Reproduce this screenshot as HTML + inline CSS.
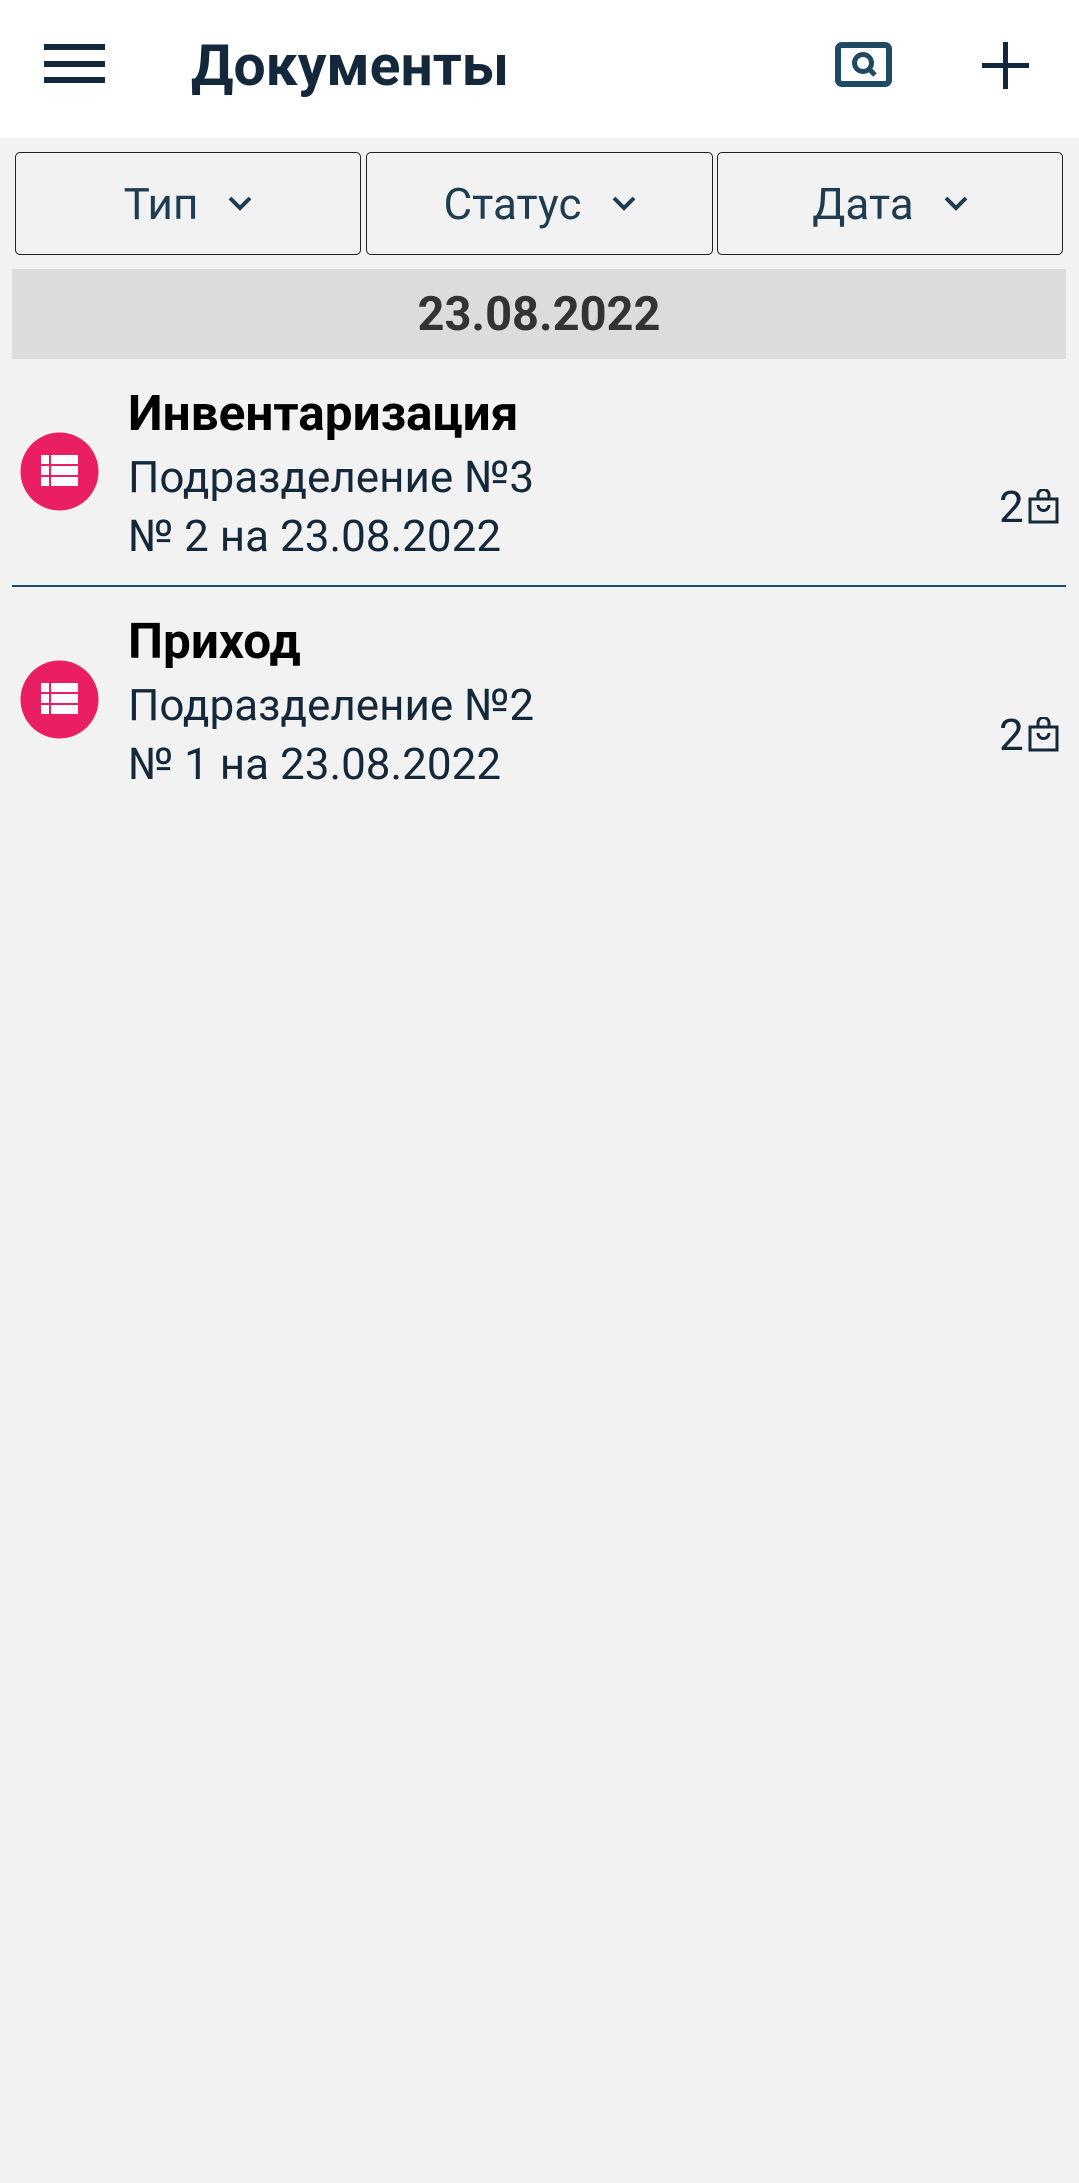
<!DOCTYPE html>
<html><head><meta charset="utf-8"><style>
*{margin:0;padding:0;box-sizing:border-box}
body{width:1079px;height:2183px;background:#f2f2f2;font-family:"Roboto","Liberation Sans",sans-serif;position:relative;overflow:hidden}
.abs{position:absolute}
.hdr{left:0;top:0;width:1079px;height:138px;background:#fff}
.btn{top:152px;height:103px;border:1.5px solid #222;border-radius:5px;background:#f2f2f2;color:#1e3d52;font-size:44px;display:flex;align-items:center;justify-content:center}
.btn svg{margin-left:30px}
.t{font-size:44px;color:#14283c;white-space:nowrap;line-height:1}
.b{font-weight:bold;color:#000;font-size:49.5px}
</style></head><body>
<div class="abs hdr"></div>
<svg class="abs" style="left:44px;top:44px" width="62" height="40"><rect x="0" y="0" width="61" height="6" fill="#14283c"/><rect x="0" y="17" width="61" height="6" fill="#14283c"/><rect x="0" y="33" width="61" height="6" fill="#14283c"/></svg>
<div class="abs t" style="left:191px;top:37px;font-size:57px;font-weight:bold;color:#14283c">Документы</div>
<svg class="abs" style="left:835px;top:42px" width="58" height="46"><rect x="3" y="3" width="51" height="39" rx="4" fill="none" stroke="#1f4a63" stroke-width="6"/><circle cx="28" cy="21" r="8.5" fill="none" stroke="#1f4a63" stroke-width="5"/><line x1="34" y1="27" x2="40" y2="33" stroke="#1f4a63" stroke-width="5"/></svg>
<svg class="abs" style="left:982px;top:42px" width="48" height="47"><rect x="0" y="21" width="47" height="5" fill="#14283c"/><rect x="21" y="0" width="5" height="47" fill="#14283c"/></svg>
<div class="abs btn" style="left:15px;width:346px">Тип<svg width="24" height="15"><path d="M2 2 L12 12 L22 2" fill="none" stroke="#1e3d52" stroke-width="4"/></svg></div>
<div class="abs btn" style="left:366px;width:347px">Статус<svg width="24" height="15"><path d="M2 2 L12 12 L22 2" fill="none" stroke="#1e3d52" stroke-width="4"/></svg></div>
<div class="abs btn" style="left:717px;width:346px">Дата<svg width="24" height="15"><path d="M2 2 L12 12 L22 2" fill="none" stroke="#1e3d52" stroke-width="4"/></svg></div>
<div class="abs" style="left:12px;top:269px;width:1054px;height:90px;background:#dcdcdc;display:flex;align-items:center;justify-content:center;font-size:47px;font-weight:bold;color:#333">23.08.2022</div>

<svg class="abs" style="left:20px;top:432px" width="79" height="79"><circle cx="39.5" cy="39.5" r="39" fill="#e91e63"/><g fill="#fff"><rect x="21" y="23" width="8" height="9"/><rect x="31" y="23" width="27" height="9"/><rect x="21" y="34" width="8" height="9"/><rect x="31" y="34" width="27" height="9"/><rect x="21" y="45" width="8" height="9"/><rect x="31" y="45" width="27" height="9"/></g></svg>
<div class="abs t b" style="left:128px;top:390px">Инвентаризация</div>
<div class="abs t" style="left:128px;top:455px">Подразделение №3</div>
<div class="abs t" style="left:128px;top:514px">№ 2 на 23.08.2022</div>
<div class="abs t" style="left:999px;top:485px">2</div>
<svg class="abs" style="left:1028px;top:489px" width="32" height="36"><rect x="2" y="10" width="27" height="23" fill="none" stroke="#14283c" stroke-width="3"/><path d="M10 10 V6 a5.5 5.5 0 0 1 11 0 V10" fill="none" stroke="#14283c" stroke-width="3"/><path d="M10 16 a5.5 5.5 0 0 0 11 0" fill="none" stroke="#14283c" stroke-width="3"/></svg>
<div class="abs" style="left:12px;top:585px;width:1054px;height:1.5px;background:#1f4a63"></div>

<svg class="abs" style="left:20px;top:660px" width="79" height="79"><circle cx="39.5" cy="39.5" r="39" fill="#e91e63"/><g fill="#fff"><rect x="21" y="23" width="8" height="9"/><rect x="31" y="23" width="27" height="9"/><rect x="21" y="34" width="8" height="9"/><rect x="31" y="34" width="27" height="9"/><rect x="21" y="45" width="8" height="9"/><rect x="31" y="45" width="27" height="9"/></g></svg>
<div class="abs t b" style="left:128px;top:618px">Приход</div>
<div class="abs t" style="left:128px;top:683px">Подразделение №2</div>
<div class="abs t" style="left:128px;top:742px">№ 1 на 23.08.2022</div>
<div class="abs t" style="left:999px;top:713px">2</div>
<svg class="abs" style="left:1028px;top:717px" width="32" height="36"><rect x="2" y="10" width="27" height="23" fill="none" stroke="#14283c" stroke-width="3"/><path d="M10 10 V6 a5.5 5.5 0 0 1 11 0 V10" fill="none" stroke="#14283c" stroke-width="3"/><path d="M10 16 a5.5 5.5 0 0 0 11 0" fill="none" stroke="#14283c" stroke-width="3"/></svg>
</body></html>
